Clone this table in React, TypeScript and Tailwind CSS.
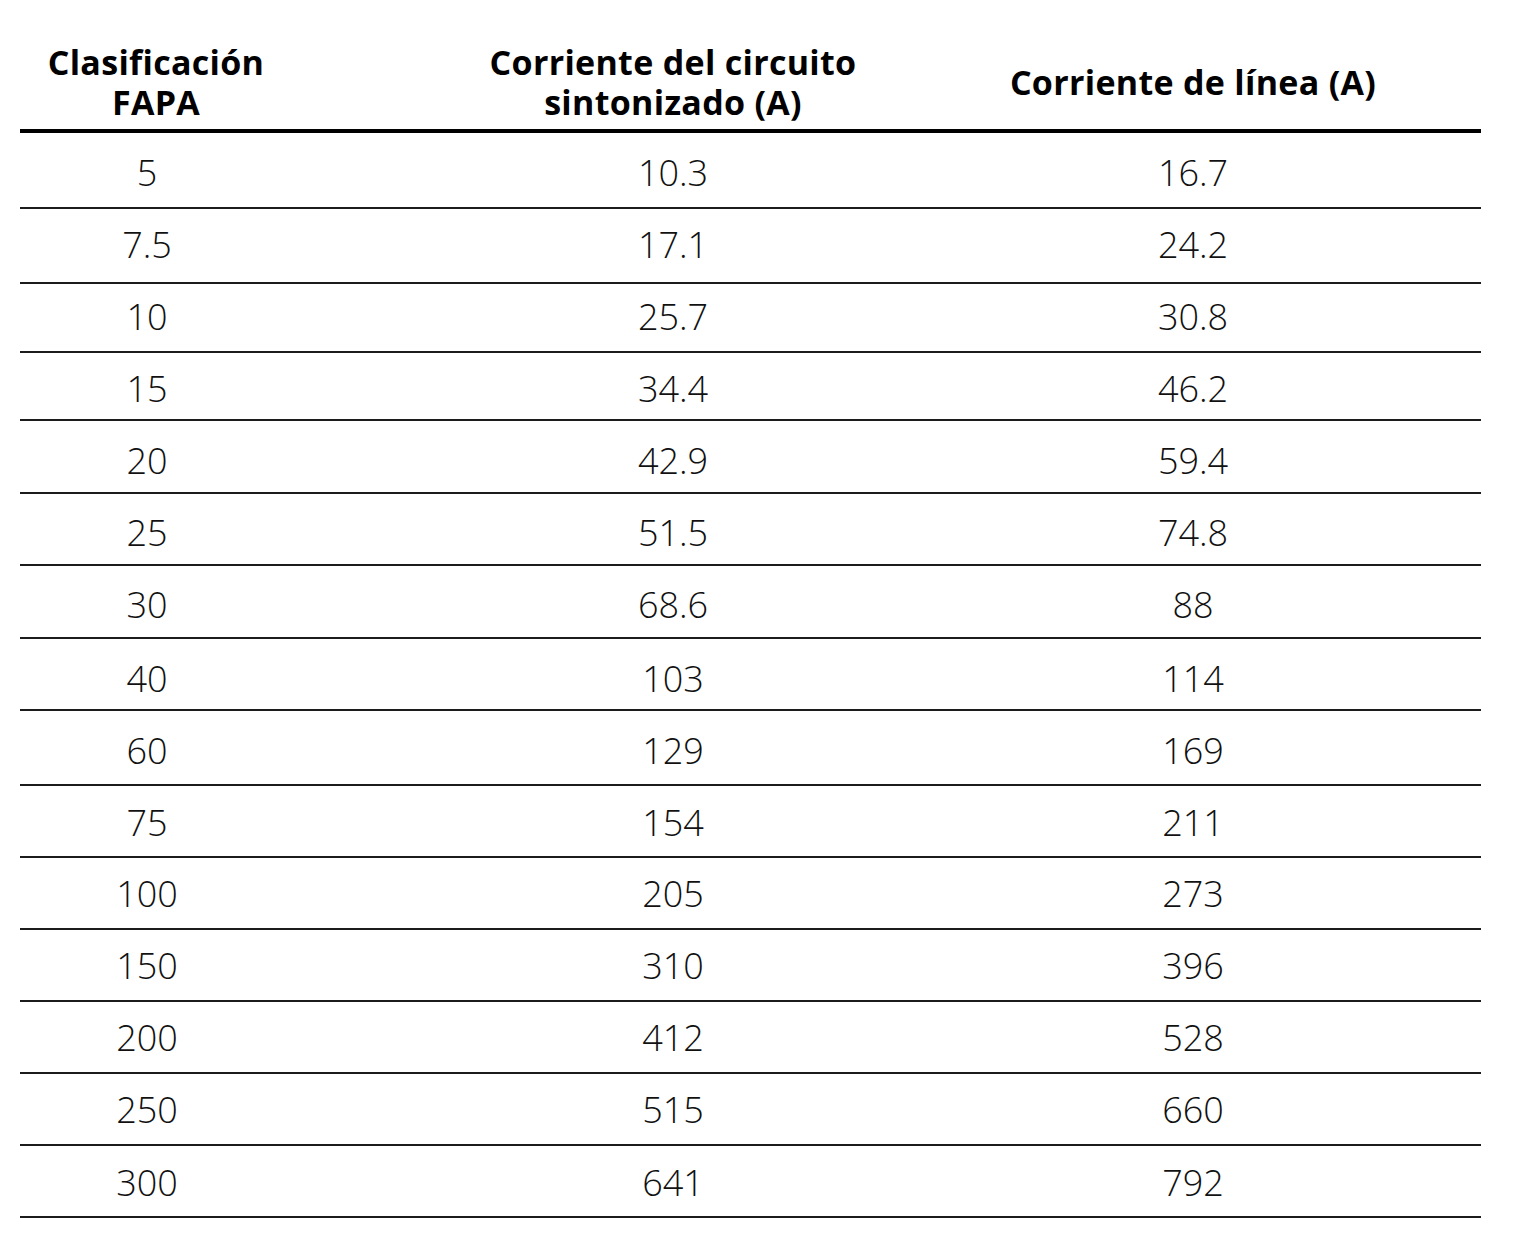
const ROWS: { h: string; fapa: string; tuned: string; line: string }[] = [
	{ h: 'h-[76px] pt-[6px]', fapa: '5', tuned: '10.3', line: '16.7' },
	{ h: 'h-[75px] pb-[2px]', fapa: '7.5', tuned: '17.1', line: '24.2' },
	{ h: 'h-[69px] pb-[2px]', fapa: '10', tuned: '25.7', line: '30.8' },
	{ h: 'h-[68px] pt-[6px]', fapa: '15', tuned: '34.4', line: '46.2' },
	{ h: 'h-[73px] pt-[8px]', fapa: '20', tuned: '42.9', line: '59.4' },
	{ h: 'h-[72px] pt-[8px]', fapa: '25', tuned: '51.5', line: '74.8' },
	{ h: 'h-[73px] pt-[6px]', fapa: '30', tuned: '68.6', line: '88' },
	{ h: 'h-[72px] pt-[9px]', fapa: '40', tuned: '103', line: '114' },
	{ h: 'h-[75px] pt-[6px]', fapa: '60', tuned: '129', line: '169' },
	{ h: 'h-[72px] pt-[4px]', fapa: '75', tuned: '154', line: '211' },
	{ h: 'h-[72px] pt-[2px]', fapa: '100', tuned: '205', line: '273' },
	{ h: 'h-[72px] pt-[2px]', fapa: '150', tuned: '310', line: '396' },
	{ h: 'h-[72px] pt-[2px]', fapa: '200', tuned: '412', line: '528' },
	{ h: 'h-[72px] pt-[2px]', fapa: '250', tuned: '515', line: '660' },
	{ h: 'h-[72px] pt-[4px]', fapa: '300', tuned: '641', line: '792' },
];

export default function App() {
	return (
		<div className="min-h-[1256px] w-[1516px] bg-white pl-[20px] font-['Open_Sans','Liberation_Sans',sans-serif] text-black">
			<div className="w-[1461px]">
				{/* Header */}
				<div className="flex h-[133px] items-center border-b-[4px] border-black pt-[38px] pb-[4px] text-[34px] font-bold leading-[40px] tracking-[0.3px]">
					<div className="w-[254px] pl-[18px] text-center">
						Clasificación
						<br />
						FAPA
					</div>
					<div className="w-[798px] text-center">
						Corriente del circuito
						<br />
						sintonizado (A)
					</div>
					<div className="flex w-[242px] justify-center whitespace-nowrap">Corriente de línea (A)</div>
				</div>

				{/* Rows */}
				{ROWS.map((row) => (
					<div
						key={row.fapa}
						className={`flex items-center border-b-2 border-[#1c1c1c] text-[36px] font-light leading-none text-[#111] ${row.h}`}
					>
						<div className="w-[254px] text-center">{row.fapa}</div>
						<div className="w-[798px] text-center">{row.tuned}</div>
						<div className="w-[242px] text-center">{row.line}</div>
					</div>
				))}
			</div>
		</div>
	);
}
